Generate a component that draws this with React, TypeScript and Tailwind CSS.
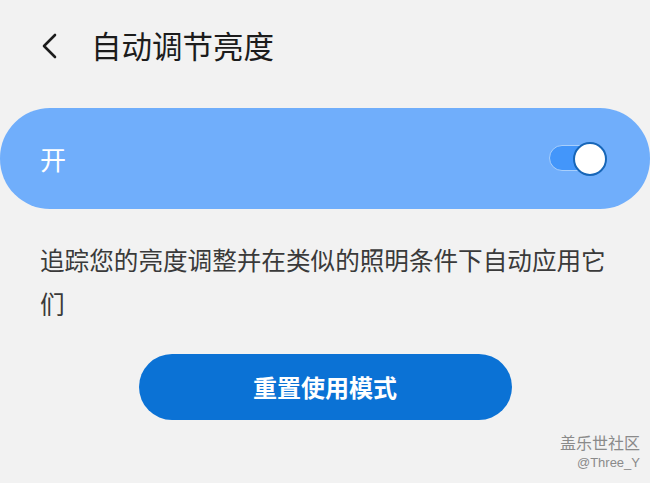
export default function App() {
  const cjk = { fontFamily: '"Noto Sans CJK SC", "Noto Sans", sans-serif' };
  return (
    <div className="w-[650px] h-[483px] bg-[#f2f2f2] overflow-hidden relative" style={cjk}>
      <div className="flex items-center h-[90px] pl-[40px]">
        <svg width="20" height="28" viewBox="0 0 20 28" className="mt-[1px]">
          <path d="M15 3 L4 14 L15 25" fill="none" stroke="#1c1c1c" strokeWidth="2.6" strokeLinecap="round" strokeLinejoin="round" />
        </svg>
        <div className="ml-[31px] text-[30.5px] leading-none text-[#1c1c1c]">自动调节亮度</div>
      </div>
      <div className="mt-[18px] h-[101px] rounded-[50px] bg-[#70aefb] flex items-center justify-between pl-[40px] pr-[43px]">
        <div className="text-[26px] text-white leading-none">开</div>
        <div className="relative w-[58px] h-[34px]">
          <div className="absolute left-0 top-[3px] w-[52px] h-[26px] rounded-full bg-[#4396fa] border-[1.5px] border-[#a8cffc]" />
          <div className="absolute right-0 top-0 w-[34px] h-[34px] rounded-full bg-white border-[2px] border-[#1766b8]" />
        </div>
      </div>
      <div className="mt-[28px] px-[40px] text-[24.6px] leading-[44px] text-[#3a3a3a]">
        追踪您的亮度调整并在类似的照明条件下自动应用它们
      </div>
      <div className="flex justify-center mt-[29px]">
        <div className="w-[373px] h-[66px] rounded-full bg-[#0b72d5] flex items-center justify-center text-white text-[24px] font-bold">
          重置使用模式
        </div>
      </div>
      <div className="absolute right-[10px] top-[432px] flex flex-col items-end text-[#8a8a8a]">
        <div className="text-[16px] leading-[20px]">盖乐世社区</div>
        <div className="text-[13px] leading-[18px] mt-[2px]" style={{ fontFamily: '"Liberation Sans", sans-serif' }}>@Three_Y</div>
      </div>
    </div>
  );
}
